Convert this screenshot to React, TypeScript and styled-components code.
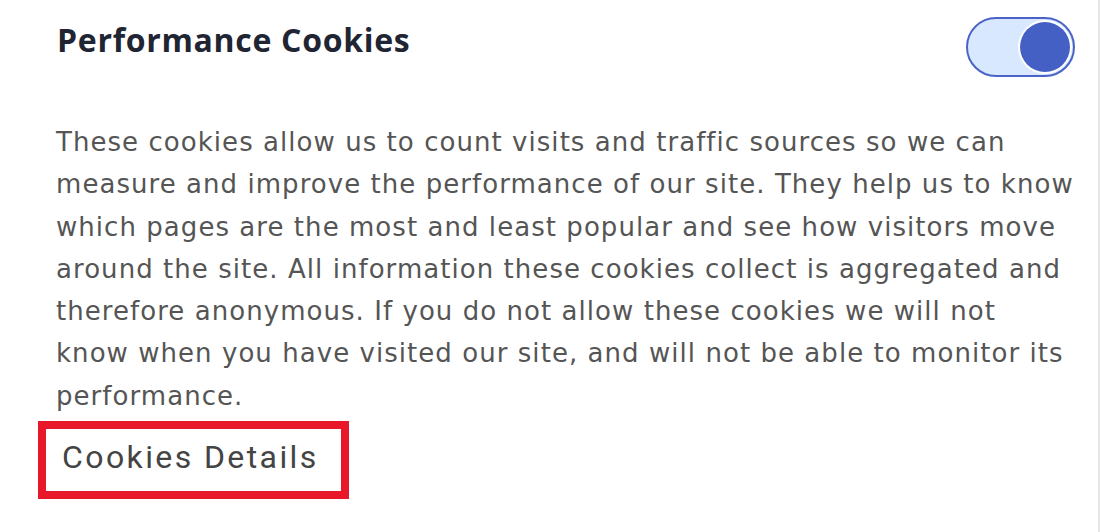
import styled, { createGlobalStyle } from "styled-components";

const GlobalStyle = createGlobalStyle`
  html, body {
    margin: 0;
    padding: 0;
    background: #ffffff;
  }
`;

const lines = [
  "These cookies allow us to count visits and traffic sources so we can",
  "measure and improve the performance of our site. They help us to know",
  "which pages are the most and least popular and see how visitors move",
  "around the site. All information these cookies collect is aggregated and",
  "therefore anonymous. If you do not allow these cookies we will not",
  "know when you have visited our site, and will not be able to monitor its",
  "performance.",
];

export default function App() {
  return (
    <>
      <GlobalStyle />
      <Panel>
        <Header>
          <Title>Performance Cookies</Title>
          <Toggle aria-checked="true" role="switch">
            <Knob />
          </Toggle>
        </Header>
        <Description>
          {lines.map((line, i) => (
            <Line key={i}>{line}</Line>
          ))}
        </Description>
        <DetailsLink>Cookies Details</DetailsLink>
      </Panel>
    </>
  );
}

const Panel = styled.div`
  box-sizing: border-box;
  width: 1100px;
  height: 532px;
  padding: 17px 23px 0 56px;
  border-right: 2px solid #e6e6e6;
  font-family: "Open Sans", sans-serif;
`;

const Header = styled.div`
  display: flex;
  align-items: center;
  justify-content: space-between;
  height: 60px;
`;

const Title = styled.h2`
  margin: -15px 0 0 1px;
  font-size: 32px;
  font-weight: 700;
  letter-spacing: 0.7px;
  color: #1f2533;
`;

const Toggle = styled.div`
  box-sizing: border-box;
  width: 109px;
  height: 60px;
  border: 2px solid #4b63c6;
  border-radius: 30px;
  background: #d8e8ff;
  display: flex;
  align-items: center;
  justify-content: flex-end;
  padding-right: 3px;
`;

const Knob = styled.span`
  width: 50px;
  height: 50px;
  border-radius: 50%;
  background: #4560c4;
  box-shadow: 0 0 0 2px #ffffff;
`;

const Description = styled.p`
  margin: 44px -20px 0 0;
  font-family: "DejaVu Sans", sans-serif;
  font-size: 26px;
  letter-spacing: 1.05px;
  line-height: 42.3px;
  color: #555555;
`;

const Line = styled.span`
  display: block;
  white-space: nowrap;
`;

const DetailsLink = styled.a`
  display: inline-block;
  box-sizing: border-box;
  margin: 4px 0 0 -18px;
  padding: 9px 22px 14px 16px;
  border: 8px solid #e8182a;
  font-family: Roboto, sans-serif;
  font-size: 32px;
  letter-spacing: 2.4px;
  color: #444444;
  line-height: 39px;
`;
